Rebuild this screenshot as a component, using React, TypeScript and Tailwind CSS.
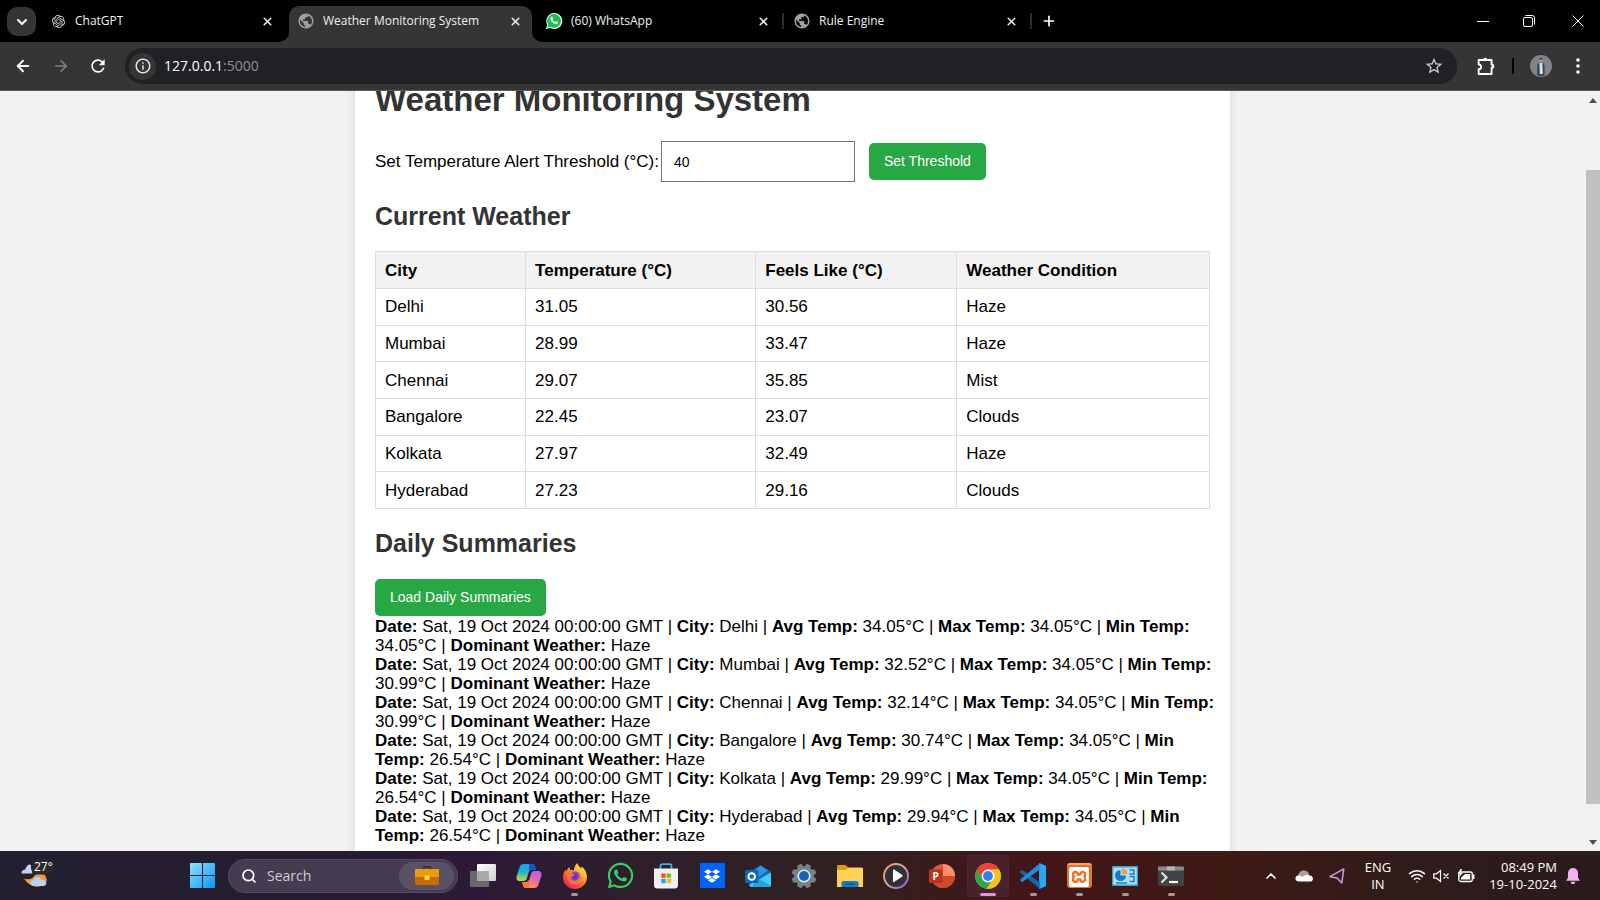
import React, { useState } from "react";
import { MdPublic, MdStarOutline, MdRefresh, MdOutlineInfo } from "react-icons/md";
import { FaWhatsapp, FaDropbox } from "react-icons/fa";
import { SiOpenai, SiXampp } from "react-icons/si";
import { ArrowLeft, ArrowRight, ChevronDown, ChevronUp, Plus, X, Search, Wifi } from "lucide-react";

const readings = [
  ["Delhi", "31.05", "30.56", "Haze"],
  ["Mumbai", "28.99", "33.47", "Haze"],
  ["Chennai", "29.07", "35.85", "Mist"],
  ["Bangalore", "22.45", "23.07", "Clouds"],
  ["Kolkata", "27.97", "32.49", "Haze"],
  ["Hyderabad", "27.23", "29.16", "Clouds"],
];

const summaries = [
  { city: "Delhi", avg: "34.05", max: "34.05", min: "34.05" },
  { city: "Mumbai", avg: "32.52", max: "34.05", min: "30.99" },
  { city: "Chennai", avg: "32.14", max: "34.05", min: "30.99" },
  { city: "Bangalore", avg: "30.74", max: "34.05", min: "26.54" },
  { city: "Kolkata", avg: "29.99", max: "34.05", min: "26.54" },
  { city: "Hyderabad", avg: "29.94", max: "34.05", min: "26.54" },
];

/* ---------- Browser ---------- */

function WhatsAppBadge() {
  return (
    <svg viewBox="0 0 18 18" className="size-[18px]" aria-hidden="true">
      <path d="M1 17l1.2-4.3A8 8 0 1 1 5.400 16z" fill="#fff" />
      <path d="M2.300 15.700l.9-3.200A6.900 6.900 0 1 1 5.700 14.900z" fill="#1fbf55" />
      <path d="M6.300 4.900c.3-.3.9-.3 1.100.1l.6 1.400c.1.300-.5.900-.5 1.100.6 1.200 1.500 2 2.700 2.500.3.100.8-.8 1.100-.7l1.400.7c.4.200.2 1.100-.1 1.500-.6.700-1.600.8-2.400.5-2.200-.7-3.800-2.200-4.600-4.200-.4-1-.1-2.200.7-2.900z" fill="#fff" />
    </svg>
  );
}

type TabProps = { icon: React.ReactNode; title: string; active?: boolean; divider?: boolean };

function BrowserTab({ icon, title, active, divider }: TabProps) {
  return (
    <div
      className={
        active
          ? "relative flex h-9 w-[243px] items-center rounded-t-[10px] bg-[#353535] pr-[9px] pb-[6px] pl-2"
          : "relative flex h-9 w-[243px] items-center pr-[9px] pb-[6px] pl-2"
      }
    >
      {active && (
        <>
          <svg viewBox="0 0 10 10" className="absolute bottom-0 -left-[10px] size-[10px]" aria-hidden="true">
            <path d="M10 0v10H0A10 10 0 0 0 10 0z" fill="#353535" />
          </svg>
          <svg viewBox="0 0 10 10" className="absolute -right-[10px] bottom-0 size-[10px]" aria-hidden="true">
            <path d="M0 0v10h10A10 10 0 0 1 0 0z" fill="#353535" />
          </svg>
        </>
      )}
      <a href="#" className="flex min-w-0 flex-1 items-center gap-2 text-[12px] leading-[18px] text-[#f0f0f0]">
        <span className="flex size-[18px] shrink-0 items-center justify-center">{icon}</span>
        <span className="truncate">{title}</span>
      </a>
      <button aria-label={`Close ${title}`} className="flex size-4 items-center justify-center text-[#e8e8e8]">
        <X className="size-[13px]" strokeWidth={3} />
      </button>
      {divider && <span className="absolute top-[7px] -right-1 h-4 w-[2px] bg-[#2c2c2c]" />}
    </div>
  );
}

function TabStrip() {
  return (
    <div className="flex h-[42px] items-end bg-black pl-[7px]">
      <button
        aria-label="Search tabs"
        className="mr-[5px] mb-[6px] flex h-[29px] w-[29px] items-center justify-center rounded-[10px] bg-[#353535] text-white"
      >
        <ChevronDown className="size-4" strokeWidth={3} />
      </button>
      <div className="flex min-w-0 flex-1 items-end gap-[5px]">
        <BrowserTab icon={<SiOpenai className="size-[13px] text-[#d8d8d8]" />} title="ChatGPT" />
        <BrowserTab icon={<MdPublic className="size-[18px] text-[#9aa0a6]" />} title="Weather Monitoring System" active />
        <BrowserTab icon={<WhatsAppBadge />} title="(60) WhatsApp" divider />
        <BrowserTab icon={<MdPublic className="size-[18px] text-[#9aa0a6]" />} title="Rule Engine" divider />
        <button aria-label="New tab" className="mb-[6px] ml-[6px] flex h-[30px] w-5 items-center justify-center text-white">
          <Plus className="size-4" strokeWidth={2.5} />
        </button>
      </div>
      <div className="mb-[6px] flex h-[30px] items-center text-white">
        <button aria-label="Minimize" className="flex w-[38px] justify-center">
          <svg viewBox="0 0 12 12" className="size-3"><path d="M0 6.500h12" stroke="currentColor" /></svg>
        </button>
        <button aria-label="Restore" className="flex w-[54px] justify-center">
          <svg viewBox="0 0 12 12" className="size-3" fill="none" stroke="currentColor">
            <rect x=".5" y="2.500" width="9" height="9" rx="1.500" />
            <path d="M2.500.5h6.500a2.500 2.500 0 0 1 2.500 2.500v6.500" />
          </svg>
        </button>
        <button aria-label="Close window" className="flex w-11 justify-center">
          <svg viewBox="0 0 12 12" className="size-3" stroke="currentColor"><path d="M.5.5l11 11M11.500.5l-11 11" /></svg>
        </button>
      </div>
    </div>
  );
}

function Avatar() {
  return (
    <svg viewBox="0 0 22 22" className="size-[22px]" aria-hidden="true">
      <circle cx="11" cy="11" r="11" fill="#80858d" />
      <path d="M7.200 20.500V11c0-2 1.500-3.200 3.800-3.200S14.600 9 14.600 11v9.500a11 11 0 0 1-7.400 0z" fill="#38445c" />
      <path d="M9.500 8h2.800l.5 11H9.800z" fill="#dbe5f2" />
      <circle cx="10.800" cy="5.600" r="2" fill="#b88d78" />
      <path d="M8.700 5.200a2.100 2.100 0 0 1 4.200 0l-1-.9H9.600z" fill="#2e2a2a" />
    </svg>
  );
}

function Toolbar() {
  return (
    <div className="flex h-[49px] items-center border-b border-[#5b5856] bg-[#353535] text-white">
      <div className="flex w-[125px] shrink-0 items-center pl-1">
        <button aria-label="Back" className="flex w-[38px] justify-center"><ArrowLeft className="size-[18px]" strokeWidth={2.5} /></button>
        <button aria-label="Forward" className="flex w-[37px] justify-center text-[#828282]"><ArrowRight className="size-[18px]" strokeWidth={2.2} /></button>
        <button aria-label="Reload" className="flex w-[38px] justify-center"><MdRefresh className="size-[20px]" /></button>
      </div>
      <div className="flex h-9 min-w-0 flex-1 items-center rounded-full bg-[#202124] pr-[13px] pl-1">
        <button aria-label="Site information" className="flex size-[27px] shrink-0 items-center justify-center rounded-full bg-[#353535]">
          <MdOutlineInfo className="size-[18px] text-[#e3e3e3]" />
        </button>
        <div className="relative ml-2 flex-1 text-[14px] leading-5">
          <input
            aria-label="Address"
            defaultValue="127.0.0.1:5000"
            className="w-full bg-transparent text-transparent caret-white outline-none"
          />
          <div aria-hidden="true" className="pointer-events-none absolute inset-0 text-[#8e8f92]">
            <span className="text-white">127.0.0.1</span>:5000
          </div>
        </div>
        <button aria-label="Bookmark"><MdStarOutline className="size-[20px] text-[#c7c7c7]" /></button>
      </div>
      <div className="flex shrink-0 items-center">
        <button aria-label="Extensions" className="ml-[18px]">
          <svg viewBox="0 0 20 20" className="size-[21px]" fill="none" aria-hidden="true">
            <path
              d="M3.500 3.800h12.300v4.400c.9 0 1.700.6 1.700 1.600s-.8 1.600-1.700 1.600v5.800H3.500v-4.600c1.300 0 2.300-.9 2.300-2.200S4.800 8.100 3.500 8.100z"
              stroke="#fff"
              strokeWidth="1.800"
              strokeLinejoin="round"
            />
            <path d="M7.800 3.600a2 2 0 0 1 4 0zM16 7.800a2 2 0 0 1 0 4z" fill="#fff" />
          </svg>
        </button>
        <span className="ml-4 h-4 w-[2px] bg-black" />
        <button aria-label="Profile" className="ml-4"><Avatar /></button>
        <button aria-label="Menu" className="mr-3 ml-4 flex w-5 justify-center">
          <svg viewBox="0 0 4 16" className="h-4 w-1" fill="#fff"><circle cx="2" cy="2" r="1.800" /><circle cx="2" cy="8" r="1.800" /><circle cx="2" cy="14" r="1.800" /></svg>
        </button>
      </div>
    </div>
  );
}

/* ---------- Page ---------- */

function WeatherPage() {
  const [threshold, setThreshold] = useState("40");
  const cell = "border border-[#dddddd] px-[9px] py-0 text-left";
  const green = "h-[37px] rounded-[5px] bg-[#28a745] px-[15px] text-[14px] text-white";
  return (
    <div className="mx-auto -mt-[30px] w-[875px] max-w-full bg-white p-5 font-['Liberation_Sans',Arial,sans-serif] text-[17px] leading-[19px] text-black shadow-[0_0_10px_rgba(0,0,0,0.1)]">
      <h1 className="text-[33px] leading-[38px] font-bold text-[#333333]">Weather Monitoring System</h1>
      <form className="mt-[22px] flex items-center" onSubmit={(e) => e.preventDefault()}>
        <label htmlFor="threshold">Set Temperature Alert Threshold (°C):</label>
        <input
          id="threshold"
          value={threshold}
          onChange={(e) => setThreshold(e.target.value)}
          className="ml-[2px] h-[41px] w-[194px] border border-[#767676] px-3 text-[14px]"
        />
        <button type="submit" className={`${green} ml-[14px]`}>Set Threshold</button>
      </form>
      <h2 className="mt-5 text-[25px] leading-7 font-bold text-[#333333]">Current Weather</h2>
      <table className="mt-[21px] h-[258px] w-full table-fixed border-collapse">
        <colgroup>
          <col className="w-[18%]" />
          <col className="w-[27.6%]" />
          <col className="w-[24.1%]" />
          <col />
        </colgroup>
        <thead>
          <tr className="h-[37px] bg-[#f2f2f2]">
            <th className={cell}>City</th>
            <th className={cell}>Temperature (°C)</th>
            <th className={cell}>Feels Like (°C)</th>
            <th className={cell}>Weather Condition</th>
          </tr>
        </thead>
        <tbody>
          {readings.map((row) => (
            <tr key={row[0]}>
              {row.map((value, i) => (
                <td key={i} className={cell}>{value}</td>
              ))}
            </tr>
          ))}
        </tbody>
      </table>
      <h2 className="mt-5 text-[25px] leading-7 font-bold text-[#333333]">Daily Summaries</h2>
      <button className={`${green} mt-[22px] block`}>Load Daily Summaries</button>
      <div className="-mr-3 pt-px">
        {summaries.map((s) => (
          <p key={s.city}>
            <strong>Date:</strong> Sat, 19 Oct 2024 00:00:00 GMT | <strong>City:</strong> {s.city} |{" "}
            <strong>Avg Temp:</strong> {s.avg}°C | <strong>Max Temp:</strong> {s.max}°C | <strong>Min Temp:</strong>{" "}
            {s.min}°C | <strong>Dominant Weather:</strong> Haze
          </p>
        ))}
      </div>
    </div>
  );
}

function Scrollbar() {
  return (
    <div className="flex w-[15px] shrink-0 flex-col items-center bg-[#f1f1f1] py-[6px]" aria-hidden="true">
      <svg viewBox="0 0 8 5" className="mt-[1px] h-[5px] w-2"><path d="M0 5l4-5 4 5z" fill="#505050" /></svg>
      <div className="flex w-full flex-1 flex-col pl-[1px]">
        <div className="basis-[67px]" />
        <div className="flex-1 bg-[#c1c1c1]" />
        <div className="basis-[36px]" />
      </div>
      <svg viewBox="0 0 8 5" className="h-[5px] w-2"><path d="M0 0l4 5 4-5z" fill="#505050" /></svg>
    </div>
  );
}

/* ---------- Taskbar icons ---------- */

const box = "size-[26px]";

const TaskViewIcon = () => (
  <svg viewBox="0 0 26 26" className={box}>
    <defs><linearGradient id="tv" x1="0" y1="0" x2="1" y2="1"><stop stopColor="#fff" /><stop offset="1" stopColor="#cfcfcf" /></linearGradient></defs>
    <rect x="7" y="1" width="19" height="17" rx="1" fill="url(#tv)" />
    <rect x="0" y="8" width="19" height="16" rx="1" fill="#777" fillOpacity=".85" />
    <path d="M7 8h12v10H7z" fill="#a9a9a9" />
  </svg>
);

const CopilotIcon = () => (
  <svg viewBox="0 0 26 26" className={box}>
    <defs>
      <linearGradient id="cpa" x1=".3" y1="0" x2=".2" y2="1"><stop stopColor="#1ba1f0" /><stop offset=".5" stopColor="#25b7c4" /><stop offset="1" stopColor="#d8d82c" /></linearGradient>
      <linearGradient id="cpb" x1=".8" y1="0" x2=".3" y2="1"><stop stopColor="#a868f0" /><stop offset=".5" stopColor="#ee68a5" /><stop offset="1" stopColor="#ff9b4e" /></linearGradient>
    </defs>
    <path d="M8 1h8c2 0 2.500 1 3 3l1 3h-4c-2 0-3 1-3.500 3L11 15c-.6 2-1.500 3-4 3H4c-3 0-4-2-3.300-5L3.500 4.500C4.200 2 5.500 1 8 1z" fill="url(#cpa)" />
    <path d="M18 25h-8c-2 0-2.500-1-3-3l-1-3h4c2 0 3-1 3.500-3L15 11c.6-2 1.500-3 4-3h3c3 0 4 2 3.300 5l-2.800 8.500C21.800 24 20.500 25 18 25z" fill="url(#cpb)" />
    <path d="M13 1h3c2 0 2.500 1 3 3l1 3h-4c-1.500 0-2.500.7-3 2z" fill="#1557c0" />
    <path d="M6 19h4c1.500 0 2.500-.7 3-2l0 8h-3c-2 0-2.500-1-3-3z" fill="#f5733e" />
  </svg>
);

const FirefoxIcon = () => (
  <svg viewBox="0 0 26 26" className={box}>
    <defs>
      <linearGradient id="ffa" x1=".85" y1="0" x2=".2" y2="1"><stop stopColor="#fff044" /><stop offset=".35" stopColor="#ffb02e" /><stop offset=".65" stopColor="#ff5a36" /><stop offset="1" stopColor="#f0136e" /></linearGradient>
      <radialGradient id="ffb"><stop stopColor="#592acb" /><stop offset="1" stopColor="#a04ae8" /></radialGradient>
    </defs>
    <path d="M15.500 0c.3 2.500 2.200 3.700 3.700 5.400.3-1 .3-1.500.2-2.200 3.600 2.700 5.600 7 5.600 10.800C25 20.800 19.800 26 13 26S1 20.800 1 14.200c0-3 1.100-5.600 2.800-7.600 0 .8.1 1.500.4 2C5 6.500 6 5 7.500 4c-.1 1.300.3 2.400 1 3.100 1.200-.2 2.300 0 3.300.6C12.300 4.500 13 1.800 15.500 0z" fill="url(#ffa)" />
    <circle cx="13.200" cy="13.800" r="5.500" fill="url(#ffb)" />
    <path d="M4.500 9.500c2-1.800 5-2.200 7.300-.7-1 .3-2.400 1-2.400 2.200 1.600-.2 3 0 3.300.7-1 1.800-3.500 1.600-3.900 3.200.3 2.200 3 3.300 5 2.500 2.600-1 4-3.600 2.700-7 4 3 3.500 9-.5 11-5 2.400-12-1-11.500-11.900z" fill="#ff7a2c" fillOpacity=".85" />
  </svg>
);

const StoreIcon = () => (
  <svg viewBox="0 0 26 26" className={box}>
    <path d="M7.500 6V3c0-1.200.6-1.800 1.800-1.800h7.400c1.200 0 1.800.6 1.800 1.800v3" fill="none" stroke="#35b3ee" strokeWidth="1.800" />
    <path d="M1 5.500h24V22a3.500 3.500 0 0 1-3.500 3.500h-17A3.500 3.500 0 0 1 1 22z" fill="#f0f0f0" />
    <path d="M8.300 10.500h4.300v4.300H8.300z" fill="#f05022" /><path d="M13.600 10.500h4.300v4.300h-4.300z" fill="#7eba00" />
    <path d="M8.300 15.900h4.300v4.300H8.300z" fill="#20a0ea" /><path d="M13.600 15.900h4.300v4.300h-4.300z" fill="#fdb813" />
  </svg>
);

const OutlookIcon = () => (
  <svg viewBox="0 0 26 26" className={box}>
    <path d="M4 10L15.500 2 26 9v13a2 2 0 0 1-2 2H6a2 2 0 0 1-2-2z" fill="#1668b8" />
    <path d="M7 8.500L15.500 3 23 7.500 12 15z" fill="#2f93de" />
    <path d="M4 22L26 9.500V22a2 2 0 0 1-2 2H6z" fill="#43cdf2" />
    <path d="M12 15l14 7.500c-.4.900-1 1.500-2 1.500H7z" fill="#27a4de" />
    <rect x="0" y="7" width="13.500" height="13" rx="1.500" fill="#0f67ba" />
    <circle cx="6.700" cy="13.500" r="3.300" fill="none" stroke="#fff" strokeWidth="2" />
  </svg>
);

const SettingsIcon = () => (
  <svg viewBox="0 0 26 26" className={box}>
    <g fill="#76828c">
      <circle cx="13" cy="13" r="9.800" />
      {[0, 45, 90, 135, 180, 225, 270, 315].map((a) => (
        <path key={a} d="M9.800 4.500L10.800.6h4.400l1 3.900z" transform={`rotate(${a + 22.5} 13 13)`} />
      ))}
    </g>
    <circle cx="13" cy="13" r="6.500" fill="#e9edf1" />
    <circle cx="13" cy="13" r="5" fill="#1463b4" />
  </svg>
);

const FolderIcon = () => (
  <svg viewBox="0 0 26 26" className={box}>
    <path d="M0 3.500C0 2.500.7 2 1.500 2h7L12 5h12.500c.8 0 1.500.5 1.500 1.500V13H0z" fill="#dc9c16" />
    <path d="M0 7h9l3-2.500h12.500c.8 0 1.500.6 1.500 1.500v18H0z" fill="#ffd255" />
    <path d="M4.500 24v-4c0-1.200.8-2 2-2h13c1.200 0 2 .8 2 2v4z" fill="#177bc7" />
    <path d="M8 20.500h10V22H8z" fill="#0b579d" />
  </svg>
);

const PlayerIcon = () => (
  <svg viewBox="0 0 26 26" className={box}>
    <defs><linearGradient id="mp" x1="0" y1="0" x2="1" y2="1"><stop stopColor="#ff9d3c" /><stop offset=".45" stopColor="#d9a5a0" /><stop offset="1" stopColor="#7e62d8" /></linearGradient></defs>
    <circle cx="13" cy="13" r="12" fill="#303138" stroke="url(#mp)" strokeWidth="1.900" />
    <path d="M10 7.200c0-.6.600-.9 1.100-.6l8.200 5.500c.6.400.6 1.100 0 1.500l-8.200 5.500c-.5.300-1.100 0-1.100-.6z" fill="#fff" />
  </svg>
);

const PowerPointIcon = () => (
  <svg viewBox="0 0 26 26" className={box}>
    <circle cx="14" cy="13" r="12" fill="#dd5a3a" />
    <path d="M14 1a12 12 0 0 1 12 12H14z" fill="#ff8f6b" />
    <path d="M14 13h12a12 12 0 0 1-22 6.600z" fill="#cf4a2a" />
    <rect x="0" y="6.500" width="13.500" height="13.500" rx="1.300" fill="#b8351d" />
    <text x="3.600" y="17" fontFamily="Open Sans, sans-serif" fontWeight="700" fontSize="10" fill="#fff">P</text>
  </svg>
);

const ChromeIcon = () => (
  <svg viewBox="0 0 26 26" className={box}>
    <circle cx="13" cy="13" r="12.800" fill="#fbc116" />
    <path d="M1.900 6.600A12.800 12.800 0 0 1 24.100 6.600H13L7.500 16.200z" fill="#ea4335" />
    <path d="M1.900 6.600a12.800 12.800 0 0 0 9.600 19.100l6.500-9.500-10.500 0z" fill="#2da44e" />
    <path d="M24.100 6.600a12.800 12.800 0 0 1-12.600 19.100l7-9.500L16 6.600z" fill="#fbc116" />
    <circle cx="13" cy="13" r="6.400" fill="#fff" />
    <circle cx="13" cy="13" r="4.900" fill="#347cf0" />
  </svg>
);

const VSCodeIcon = () => (
  <svg viewBox="0 0 26 26" className={box}>
    <path d="M19 0l7 3v20l-7 3z" fill="#2ba6f2" />
    <path d="M0 8.700L2.300 7 20 19.500V26L.3 9.600z" fill="#0a6bb4" />
    <path d="M0 17.300L2.300 19 20 6.500V0L.3 16.400z" fill="#1e8ddb" />
    <path d="M19 0l7 3v20l-7 3c.6 0 .7-.5.700-1V1c0-.5-.1-1-.7-1z" fill="#2ba6f2" />
  </svg>
);

const ControlPanelIcon = () => (
  <svg viewBox="0 0 26 26" className={box}>
    <rect x="0" y="3" width="26" height="20" rx="1" fill="#3d9fd0" />
    <rect x="1.300" y="4.500" width="23.400" height="17" fill="#a8e2fa" />
    <path d="M8.500 12.500V7A5.500 5.500 0 1 0 14 12.500z" fill="#1d78c1" />
    <path d="M10 11V5.500A5.500 5.500 0 0 1 15.500 11z" fill="#f39c2b" />
    <path d="M17.500 7h4.500v4h-4.500M17.500 13.500H22v5h-4.500M4 20h11" fill="none" stroke="#2f7ab1" strokeWidth="1.500" />
  </svg>
);

const TerminalIcon = () => (
  <svg viewBox="0 0 26 26" className={box}>
    <rect x="0" y="3.500" width="26" height="19.500" rx="1.500" fill="#424242" />
    <path d="M0 7.500V5c0-.8.7-1.500 1.500-1.500h23c.8 0 1.500.7 1.500 1.500v2.500z" fill="#8a8a8a" />
    <path d="M9 3.500h8v4H9z" fill="#b3b3b3" />
    <path d="M3.500 9.500l5 5-5 5" fill="none" stroke="#e0e0e0" strokeWidth="2.200" />
    <path d="M11 19h9" stroke="#fff" strokeWidth="2.200" />
  </svg>
);

const apps: { name: string; icon: React.ReactNode; open?: boolean; current?: boolean }[] = [
  { name: "Task view", icon: <TaskViewIcon /> },
  { name: "Copilot", icon: <CopilotIcon /> },
  { name: "Firefox", icon: <FirefoxIcon />, open: true },
  { name: "WhatsApp", icon: <FaWhatsapp className="size-[29px] text-[#2ed366]" /> },
  { name: "Microsoft Store", icon: <StoreIcon /> },
  { name: "Dropbox", icon: <span className="flex size-[25px] items-center justify-center bg-[#0061fe]"><FaDropbox className="size-4 text-white" /></span> },
  { name: "Outlook", icon: <OutlookIcon /> },
  { name: "Settings", icon: <SettingsIcon /> },
  { name: "File Explorer", icon: <FolderIcon /> },
  { name: "Media Player", icon: <PlayerIcon /> },
  { name: "PowerPoint", icon: <PowerPointIcon /> },
  { name: "Chrome", icon: <ChromeIcon />, current: true },
  { name: "Visual Studio Code", icon: <VSCodeIcon />, open: true },
  { name: "XAMPP", icon: <span className="flex size-[25px] items-center justify-center rounded-[3px] border-t-2 border-[#f7a773] bg-[#ea7125]"><SiXampp className="size-5 text-white" /></span>, open: true },
  { name: "Control Panel", icon: <ControlPanelIcon />, open: true },
  { name: "Terminal", icon: <TerminalIcon />, open: true },
];

function Taskbar() {
  return (
    <footer className="flex h-[49px] shrink-0 items-center bg-[linear-gradient(90deg,#231f30_0%,#251c30_18%,#2d1937_30%,#2f1f2b_40%,#2f2220_52%,#421619_64%,#3e1a15_77%,#2f1b1a_88%,#2a1b1c_100%)] text-white">
      <button aria-label="Weather" className="ml-5 flex h-10 w-9">
        <svg viewBox="0 0 36 40" className="h-10 w-9" aria-hidden="true">
          <path d="M1.500 17.500c0-2.500 1.500-4 3.800-4C6 10.500 8 8.500 9.500 8.500c2 0 2.800 3 2.800 9z" fill="#c2d4f3" />
          <path d="M15 19c2-.5 6-.6 10 0l2 5c-2 5-7 7.500-12 6.500-5-1-9-4.500-11-8 4 1.500 9 .5 11-3.500z" fill="#f39b36" />
          <path d="M14 30c-4.500 0-5-6-.5-6.300 1-3.500 7-3.500 8 0 6-.4 6.500 6.300 1.500 6.300z" fill="#bad0f2" />
          <rect x="11" y="3" width="22" height="15" rx="6" fill="#2a2828" />
          <text x="14" y="15" fontFamily="Open Sans, sans-serif" fontSize="12" fill="#fff">27°</text>
        </svg>
      </button>
      <button aria-label="Start" className="ml-[134px]">
        <svg viewBox="0 0 24 24" className="size-[25px]" aria-hidden="true">
          <defs><linearGradient id="win" x1="0" y1="0" x2="1" y2="1"><stop stopColor="#8fe3fc" /><stop offset="1" stopColor="#0a95f5" /></linearGradient></defs>
          <path d="M0 1a1 1 0 0 1 1-1h10.500v11.500H0zM12.500 0H23a1 1 0 0 1 1 1v10.500H12.500zM0 12.500h11.500V24H1a1 1 0 0 1-1-1zM12.500 12.500H24V23a1 1 0 0 1-1 1H12.500z" fill="url(#win)" />
        </svg>
      </button>
      <label className="ml-[13px] flex h-[34px] w-[230px] items-center rounded-full border border-[#554d61] bg-[#443c50] pr-[3px] pl-3">
        <Search className="size-4 shrink-0" strokeWidth={2.5} />
        <input placeholder="Search" className="ml-[10px] w-0 min-w-0 flex-1 bg-transparent text-[14px] outline-none placeholder:text-[#cfcbd4]" />
        <span className="flex h-7 w-[55px] shrink-0 items-center justify-center rounded-full bg-[#5a5164]">
          <svg viewBox="0 0 24 20" className="h-5 w-6" aria-hidden="true">
            <path d="M8.500 3.500V2c0-.6.400-1 1-1h5c.6 0 1 .4 1 1v1.500" fill="none" stroke="#3b3230" strokeWidth="1.800" />
            <rect y="3" width="24" height="16" rx="1" fill="#c66c05" />
            <path d="M0 4a1 1 0 0 1 1-1h22a1 1 0 0 1 1 1v7H0z" fill="#ee9a10" />
            <rect x="9.500" y="9.500" width="5" height="4.500" rx=".8" fill="#ffd93b" />
          </svg>
        </span>
      </label>
      <nav aria-label="Pinned apps" className="ml-[2px] grid w-[734px] grid-cols-16">
        {apps.map((app) => (
          <button key={app.name} aria-label={app.name} className="relative flex h-[49px] items-center justify-center">
            {app.current && <span className="absolute inset-x-[2px] top-1 h-[42px] rounded-[4px] border border-[#4e262b] bg-[#48222a]" />}
            <span className="relative">{app.icon}</span>
            {app.open && <span className="absolute bottom-[4px] h-[3px] w-[7px] rounded-full bg-[#a99898]" />}
            {app.current && <span className="absolute bottom-[4px] h-[3px] w-4 rounded-full bg-[#dd96dd]" />}
          </button>
        ))}
      </nav>
      <div className="ml-auto flex items-center pr-5">
        <button aria-label="Hidden icons"><ChevronUp className="size-4" strokeWidth={2.5} /></button>
        <svg viewBox="0 0 18 12" className="ml-4 h-3 w-[18px]" aria-hidden="true">
          <path d="M3 6C3.500 2.500 6 .5 9 .5c2.500 0 4.500 1.500 5.200 4L8 8z" fill="#a9a1a0" />
          <path d="M4 11.500c-4.500 0-4.800-5.500-.8-6 2-.3 3.300.5 4.300 1.500 2-2 5.500-3 7-1.500 4.500 0 4.500 6 .5 6z" fill="#fff" />
        </svg>
        <svg viewBox="0 0 16 16" className="ml-4 size-4" fill="none" stroke="#cf9fd8" strokeWidth="1.500" strokeLinejoin="round" aria-hidden="true">
          <path d="M14.800.9L1 8.700l7 1.200 4.800 5z" />
        </svg>
        <div className="ml-5 text-center text-[13px] leading-[17px]"><div>ENG</div><div>IN</div></div>
        <div className="ml-[17px] flex items-center gap-[7px]">
          <Wifi className="size-[18px]" strokeWidth={2} />
          <svg viewBox="0 0 17 14" className="h-[14px] w-[17px]" fill="none" stroke="#fff" strokeWidth="1.200" aria-hidden="true">
            <path d="M.8 4.800h2.700L7.500 1.500v11L3.500 9.200H.8zM10.500 4.500l5 5M15.500 4.500l-5 5" />
          </svg>
          <svg viewBox="0 0 18 14" className="h-[14px] w-[18px]" aria-hidden="true">
            <rect x="1.800" y="3" width="13.500" height="9.500" rx="2" fill="none" stroke="#fff" strokeWidth="1.300" />
            <path d="M4 10.500V8.800L8 5h5.200v5.500z" fill="#fff" /><path d="M16 5.500h1.500V10H16z" fill="#fff" />
            <path d="M3.500 0L.5 5H3L1.800 8.800 6 3.800H3.600L5 0z" fill="#fff" />
          </svg>
        </div>
        <div className="ml-[14px] text-right text-[13px] leading-[17px]"><div>08:49 PM</div><div>19-10-2024</div></div>
        <svg viewBox="0 0 14 16" className="ml-[9px] h-4 w-[14px]" fill="#efb4ef" aria-hidden="true">
          <path d="M7 0a5 5 0 0 1 5 5v4.500l1.800 3.300H.2L2 9.500V5a5 5 0 0 1 5-5zM4.700 13.800h4.600a2.300 2.300 0 0 1-4.600 0z" />
        </svg>
      </div>
    </footer>
  );
}

export default function App() {
  return (
    <div className="flex h-screen flex-col overflow-hidden font-['Open_Sans','Noto_Sans',sans-serif]">
      <header className="shrink-0">
        <TabStrip />
        <Toolbar />
      </header>
      <div className="flex min-h-0 flex-1 bg-[#f2f2f2]">
        <main className="min-w-0 flex-1 overflow-hidden"><WeatherPage /></main>
        <Scrollbar />
      </div>
      <Taskbar />
    </div>
  );
}
